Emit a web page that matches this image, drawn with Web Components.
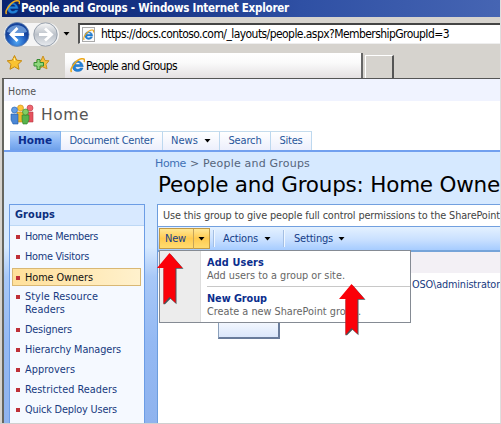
<!DOCTYPE html>
<html lang="en"><head><meta charset="utf-8"><title>People and Groups</title>
<style>html,body{margin:0;width:501px;height:424px;overflow:hidden;background:#d6d3ce}</style></head>
<body><browser-window></browser-window>
<script>
const define = (name, html, setup) => customElements.define(name, class extends HTMLElement {
  connectedCallback() {
    if (this.shadowRoot) return;
    const t = document.createElement('template');
    t.innerHTML = html;
    this.attachShadow({mode: 'open'}).append(t.content.cloneNode(true));
    if (setup) setup(this);
  }
});

// Text run whose tracking is adjusted to a given advance width.
define('fit-text', `<style>:host{display:block;white-space:nowrap;flex:none}span{display:inline-block}</style><span><slot></slot></span>`, el => {
  const s = el.shadowRoot.querySelector('span'), w = +el.getAttribute('w');
  if (!w) return;
  const n = el.textContent.length, natural = s.getBoundingClientRect().width;
  s.style.letterSpacing = ((w - natural) / n) + 'px';
  el.style.width = w + 'px';
});

define('ie-logo', `<style>:host{display:block;width:15px;height:15px;flex:none}svg{display:block}</style>
<svg width="100%" height="100%" viewBox="0 0 16 16"><path d="M14.2 9.3H5.7c.2 3 3.8 3.5 5.2 1.4h3C12.500 16 3 16 2.500 9 2 1.500 13.500.800 14.200 9.300ZM5.800 6.900h5.100C10.400 4 6.300 4 5.800 6.900Z" fill="#2382d8" stroke="#0c57a8" stroke-width=".4"/><path d="M1.700 15C-1 11.500 8-.800 14.600 1c1.300.4 1 2.200.3 3.200" fill="none" stroke="#eda91d" stroke-width="1.700"/></svg>`);

define('down-arrow', `<style>:host{display:block;width:7px;height:4px;flex:none}svg{display:block}</style><svg width="7" height="4"><path d="M.5 0h6L3.500 3.500Z" fill="#000"/></svg>`);

define('title-bar', `<style>:host{display:flex;box-sizing:border-box;height:17px;margin-left:2px;padding-left:3px;gap:1px;background:linear-gradient(90deg,#0a2470,#163385 30%,#2f50a4 60%,#4665b3);color:#fff;font:bold 11.5px/16px "DejaVu Sans Condensed","DejaVu Sans",sans-serif}</style>
<ie-logo></ie-logo><fit-text w="268">People and Groups - Windows Internet Explorer</fit-text>`);

define('address-row', `<style>:host{display:flex;height:34px;padding:6px 0 0 4px;box-sizing:border-box;color:#000;font:12px/20px "DejaVu Sans Condensed","DejaVu Sans",sans-serif}
.nav{width:56px;height:26px;margin-top:-1px;flex:none}down-arrow{margin:9px 8px 0 3px}
.box{flex:1;display:flex;height:21px;box-sizing:border-box;border:2px solid #555;border-top-color:#444;border-right:0;border-bottom:1px solid #eee;background:#fff;align-items:center}
.page{width:13px;height:15px;box-sizing:border-box;border:1px solid #aaa;margin:0 6px 0 2px;background:#fafafa}.page ie-logo{width:11px;height:12px;margin:1px 0 0 0}</style>
<svg class="nav" viewBox="0 0 56 26"><defs><radialGradient id="b" cx=".5" cy=".8"><stop stop-color="#52a7f2"/><stop offset=".65" stop-color="#2464c5"/><stop offset="1" stop-color="#16439b"/></radialGradient><linearGradient id="g" x2="0" y2="1"><stop stop-color="#f8f8f8"/><stop offset=".5" stop-color="#bcc2ca"/><stop offset="1" stop-color="#e8ebef"/></linearGradient></defs>
<rect x="0" y="1" width="55" height="23" rx="11" fill="#f5f5f5"/><circle cx="13" cy="12.500" r="12" fill="url(#b)" stroke="#6685ae" stroke-width=".8"/><path d="M3 10C5 1 21 1 23 10Q13 13 3 10Z" fill="#8fbdf0" opacity=".65"/><path d="M13.500 6 7 12.500l6.500 6.500M8 12.500h12" fill="none" stroke="#fff" stroke-width="2.800"/>
<circle cx="41.500" cy="12.500" r="11.700" fill="url(#g)" stroke="#98a1ad"/><path d="M41 6.500l6.500 6-6.500 6M46.500 12.500H35" fill="none" stroke="#fff" stroke-width="2.800"/></svg>
<down-arrow></down-arrow><div class="box"><div class="page"><ie-logo></ie-logo></div><fit-text w="348">https://docs.contoso.com/_layouts/people.aspx?MembershipGroupId=3</fit-text></div>`);

define('tab-row', `<style>:host{display:flex;height:28px;box-sizing:border-box;border-bottom:1px solid #555;margin-left:2px;padding-left:4px;color:#000;font:12px/24px "DejaVu Sans Condensed","DejaVu Sans",sans-serif}
svg{width:58px;height:27px;flex:none;margin-right:1px}.tab{display:flex;width:298px;margin-top:2px;height:25px;box-sizing:border-box;border-right:2px solid #666;padding:5px 0 0 5px;gap:1px;background:linear-gradient(#fff,#fafafa 40%,#e4e0e2);line-height:18px}.tab fit-text{margin-top:-1px}
.new{width:29px;height:23px;margin:4px 0 0 2px;box-sizing:border-box;border:1px solid #fff;border-right:2px solid #555;border-bottom:0}</style>
<svg viewBox="0 0 58 27"><path d="M8.500 4.500l2.200 4.700 5.100.6-3.800 3.500 1 5-4.500-2.500-4.500 2.500 1-5-3.800-3.500 5.100-.6Z" fill="#fac332" stroke="#c78910"/><path d="M8 7l1 3" stroke="#fff3a0"/><path d="M37 5l2 4.500 4 .3-3 3.500 1 4.500-4.500-2-4 2 1-4.500-3-3.500 4.500-.3Z" fill="#f5be3b" stroke="#c89225"/><path d="M31 8.500h3v3h3.500v3.500h-3.500v3.500h-3v-3.500h-3v-3.500h3Z" fill="#8fd67c" stroke="#368d32"/></svg>
<div class="tab"><ie-logo></ie-logo><fit-text w="91">People and Groups</fit-text></div><div class="new"></div>`);

define('site-header', `<style>:host{display:block;font-family:"DejaVu Sans Condensed","DejaVu Sans",sans-serif;color:#555}
.global{height:22px;box-sizing:border-box;background:#f0f3ff;padding:5px 0 0 4px;font-size:10.500px;line-height:14px}.brand{height:30px;display:flex;background:#fff;padding-left:6px;font:15.500px/29px "DejaVu Sans",sans-serif;gap:6px}.brand svg{width:25px;height:22px;margin-top:3px}</style>
<div class="global"><fit-text w="28">Home</fit-text></div><div class="brand"><svg viewBox="0 0 25 22"><g stroke-width=".6"><path d="M7 8h7v10H7Z" fill="#efb72b" stroke="#c78411"/><circle cx="10.500" cy="4" r="3" fill="#ffc638" stroke="#c78411"/><path d="M16 8h7v10h-5Z" fill="#e6525d" stroke="#b93945"/><circle cx="20" cy="4" r="3" fill="#ef6670" stroke="#b93945"/><path d="M1 10h7v10H3l-2-4Z" fill="#4b87d5" stroke="#205aa7"/><circle cx="4.500" cy="6" r="3" fill="#659fe5" stroke="#205aa7"/><path d="M12 11h7v5l-2 4h-4l-1-4Z" fill="#58b34b" stroke="#2a8228"/><circle cx="15.500" cy="8" r="3" fill="#83cd62" stroke="#2a8228"/></g></svg><fit-text w="48">Home</fit-text></div>`);

define('site-tabs', `<style>:host{display:flex;height:21px;box-sizing:border-box;border-bottom:2px solid #72a0ef;background:#fff;padding-left:6px;color:#28569b;font:11px/17px "DejaVu Sans Condensed","DejaVu Sans",sans-serif}
div{box-sizing:border-box;height:19px;display:flex;align-items:center;justify-content:center;border-top:1px solid #c5dced;border-right:1px solid #bdd8ef;background:linear-gradient(#fff,#eceffc);padding-bottom:1px}.on{background:linear-gradient(#b5d4fa,#86b3f4 60%,#6da0ea);color:#0b2e8d;font:bold 10.500px/17px "DejaVu Sans",sans-serif;border-color:#85b4ed}down-arrow{margin-left:6px}</style>
<div class="on" style="width:51px"><fit-text w="34">Home</fit-text></div><div style="width:102px"><fit-text w="84">Document Center</fit-text></div><div style="width:57px"><fit-text w="27">News</fit-text><down-arrow></down-arrow></div><div style="width:51px"><fit-text w="33">Search</fit-text></div><div style="width:41px"><fit-text w="23">Sites</fit-text></div>`);

define('group-item', `<style>:host{display:flex;box-sizing:border-box;min-height:20px;padding:3px 0 3px 6px;gap:5px;line-height:14px}i{width:4px;height:4px;background:#bf3038;margin-top:5px;flex:none}
:host([on]){border:1px solid #d9b874;background:linear-gradient(90deg,#ffe09a,#ffeab9 60%,#fff1cd);margin:1px 3px 0 2px;padding:2px 0 0 3px;height:18px;min-height:18px;color:#111}:host([two]){line-height:13px;padding-top:3px;margin-top:1px;height:33px}</style><i></i><div><slot></slot></div>`);

define('group-nav', `<style>:host{display:block;flex:none;box-sizing:border-box;width:136px;height:220px;margin:52px 0 0 5px;border:1px solid #6c9de5;border-bottom:0;background:#f5f9ff;color:#173a80;font:10.800px/14px "DejaVu Sans Condensed","DejaVu Sans",sans-serif}
.h{height:21px;box-sizing:border-box;border-bottom:1px solid #bdd8f5;background:#d8e9ff;color:#0b2e7d;font-weight:bold;line-height:20px;padding-left:5px;margin-bottom:1px}</style>
<div class="h"><fit-text w="40">Groups</fit-text></div>
<group-item><fit-text w="73">Home Members</fit-text></group-item><group-item><fit-text w="64">Home Visitors</fit-text></group-item><group-item on><fit-text w="68">Home Owners</fit-text></group-item><group-item two><fit-text w="73">Style Resource</fit-text><fit-text w="40">Readers</fit-text></group-item><group-item><fit-text w="47">Designers</fit-text></group-item><group-item><fit-text w="96">Hierarchy Managers</fit-text></group-item><group-item><fit-text w="50">Approvers</fit-text></group-item><group-item><fit-text w="92">Restricted Readers</fit-text></group-item><group-item><fit-text w="92">Quick Deploy Users</fit-text></group-item>`);

define('tool-bar', `<style>:host{display:flex;height:26px;box-sizing:border-box;border-top:1px solid #72a0df;border-bottom:2px solid #76a4d9;background:linear-gradient(#e4f1ff,#c9e0ff 55%,#a6ccff);color:#153d87;align-items:center;font:11px/20px "DejaVu Sans Condensed","DejaVu Sans",sans-serif}
.new{display:flex;box-sizing:border-box;width:51px;height:21px;margin-left:1px;border:1px solid #c29a45;background:linear-gradient(#ffe794,#ffcb50 50%,#ffdc70);align-items:center;padding-left:5px}.new down-arrow{border-left:1px solid #c4a45c;padding:8px 0 8px 4px;margin-left:7px;height:4px}
.a,.b{display:flex;align-items:center;gap:6px}.b{gap:5px}.sep{width:1px;height:17px;background:#a4bfe3;border-right:1px solid #eff7ff;margin-left:3px}.sep+.a{margin-left:8px}.sep+.b{margin-left:9px}.a+.sep{margin-left:12px}</style>
<div class="new"><fit-text w="21">New</fit-text><down-arrow></down-arrow></div><div class="sep"></div><div class="a"><fit-text w="35">Actions</fit-text><down-arrow></down-arrow></div><div class="sep"></div><div class="b"><fit-text w="39">Settings</fit-text><down-arrow></down-arrow></div>`);

define('drop-menu', `<style>:host{display:flex;box-sizing:border-box;width:252px;height:73px;border:1px solid #858b94;background:#fff;color:#666;font:10.800px/13px "DejaVu Sans Condensed","DejaVu Sans",sans-serif}
.rail{width:40px;background:#ececec;border-right:1px solid #ddd}.items{flex:1;padding:5px 0 0 6px}b{color:#0b2e8d;display:block}hr{border:0;border-top:1px solid #c8c8c8;margin:4px 0 5px}</style>
<div class="rail"></div><div class="items"><b><fit-text w="57">Add Users</fit-text></b><fit-text w="138">Add users to a group or site.</fit-text><hr><b><fit-text w="60">New Group</fit-text></b><fit-text w="154">Create a new SharePoint group.</fit-text></div>`);

define('red-pointer', `<style>:host{display:block;width:28px;height:54px}svg{display:block}</style><svg width="28" height="54"><path d="M13.500 1 26.500 15.700h-7v35.500l-6-5.500-5.500 5.500H6.500V16Z" fill="#46575c"/><path d="M12.500 0 25.500 15h-7v35l-6-6-6 7V15H0Z" fill="#fb0008"/></svg>`);

define('group-page', `<style>:host{display:block;flex:1;min-width:0;padding-left:11px;font-family:"DejaVu Sans Condensed","DejaVu Sans",sans-serif;overflow:hidden}
.crumb{display:flex;color:#55657b;font:11px/14px "DejaVu Sans",sans-serif;height:18px;padding-top:5px;box-sizing:border-box}.crumb .l{color:#4070b5;margin:0 4px 0 -1px}h1{margin:0 0 0 2px;height:34px;font:21.500px/30px "DejaVu Sans",sans-serif;color:#000}
.panel{height:220px;margin-left:1px;border-left:1px solid #6c9ddd;border-top:1px solid #72a0df;box-sizing:border-box;background:#fff}.desc{height:21px;padding-left:5px;color:#444;font-size:10.800px;line-height:21px}
.head{height:21px;background:#f3f0f5}.row{padding:5px 0 0 254px;color:#173a80;font-size:10.800px;line-height:14px;display:flex}.btn{box-sizing:border-box;width:62px;height:25px;margin:22px 0 0 60px;border:1px solid #8ba0bb;border-right:2px solid #697c9b;border-bottom:2px solid #697c9b;background:linear-gradient(#fff,#dbe7fb)}</style>
<div class="crumb"><fit-text class="l" w="31">Home</fit-text><fit-text w="120">&gt; People and Groups</fit-text></div><h1><fit-text w="342">People and Groups: Home Owne</fit-text></h1>
<div class="panel"><div class="desc"><fit-text w="337">Use this group to give people full control permissions to the SharePoint</fit-text></div><tool-bar></tool-bar><div class="head"></div><div class="row"><fit-text w="88">OSO\\administrator</fit-text></div><div class="btn"></div></div>`);

define('browser-window', `<style>:host{display:block;position:relative;box-sizing:border-box;width:501px;height:424px;border-right:1px solid #dedede;border-bottom:1px solid #d0d0d0;overflow:hidden;background:#d6d3ce}
.view{margin-left:2px;border-left:2px solid #66665f;box-sizing:border-box}.body{display:flex;height:272px;background:linear-gradient(#d6e9ff 0,#d6e9ff 95px,#a8c8f7 125px,#94b9f3 190px,#8fb3ee)}
drop-menu,red-pointer{position:absolute}drop-menu{left:159px;top:250px}.p1{left:157px;top:253px}.p2{left:339px;top:284px}</style>
<title-bar></title-bar><address-row></address-row><tab-row></tab-row><div class="view"><site-header></site-header><site-tabs></site-tabs><div class="body"><group-nav></group-nav><group-page></group-page></div></div><drop-menu></drop-menu><red-pointer class="p1"></red-pointer><red-pointer class="p2"></red-pointer>`);
</script></body></html>
